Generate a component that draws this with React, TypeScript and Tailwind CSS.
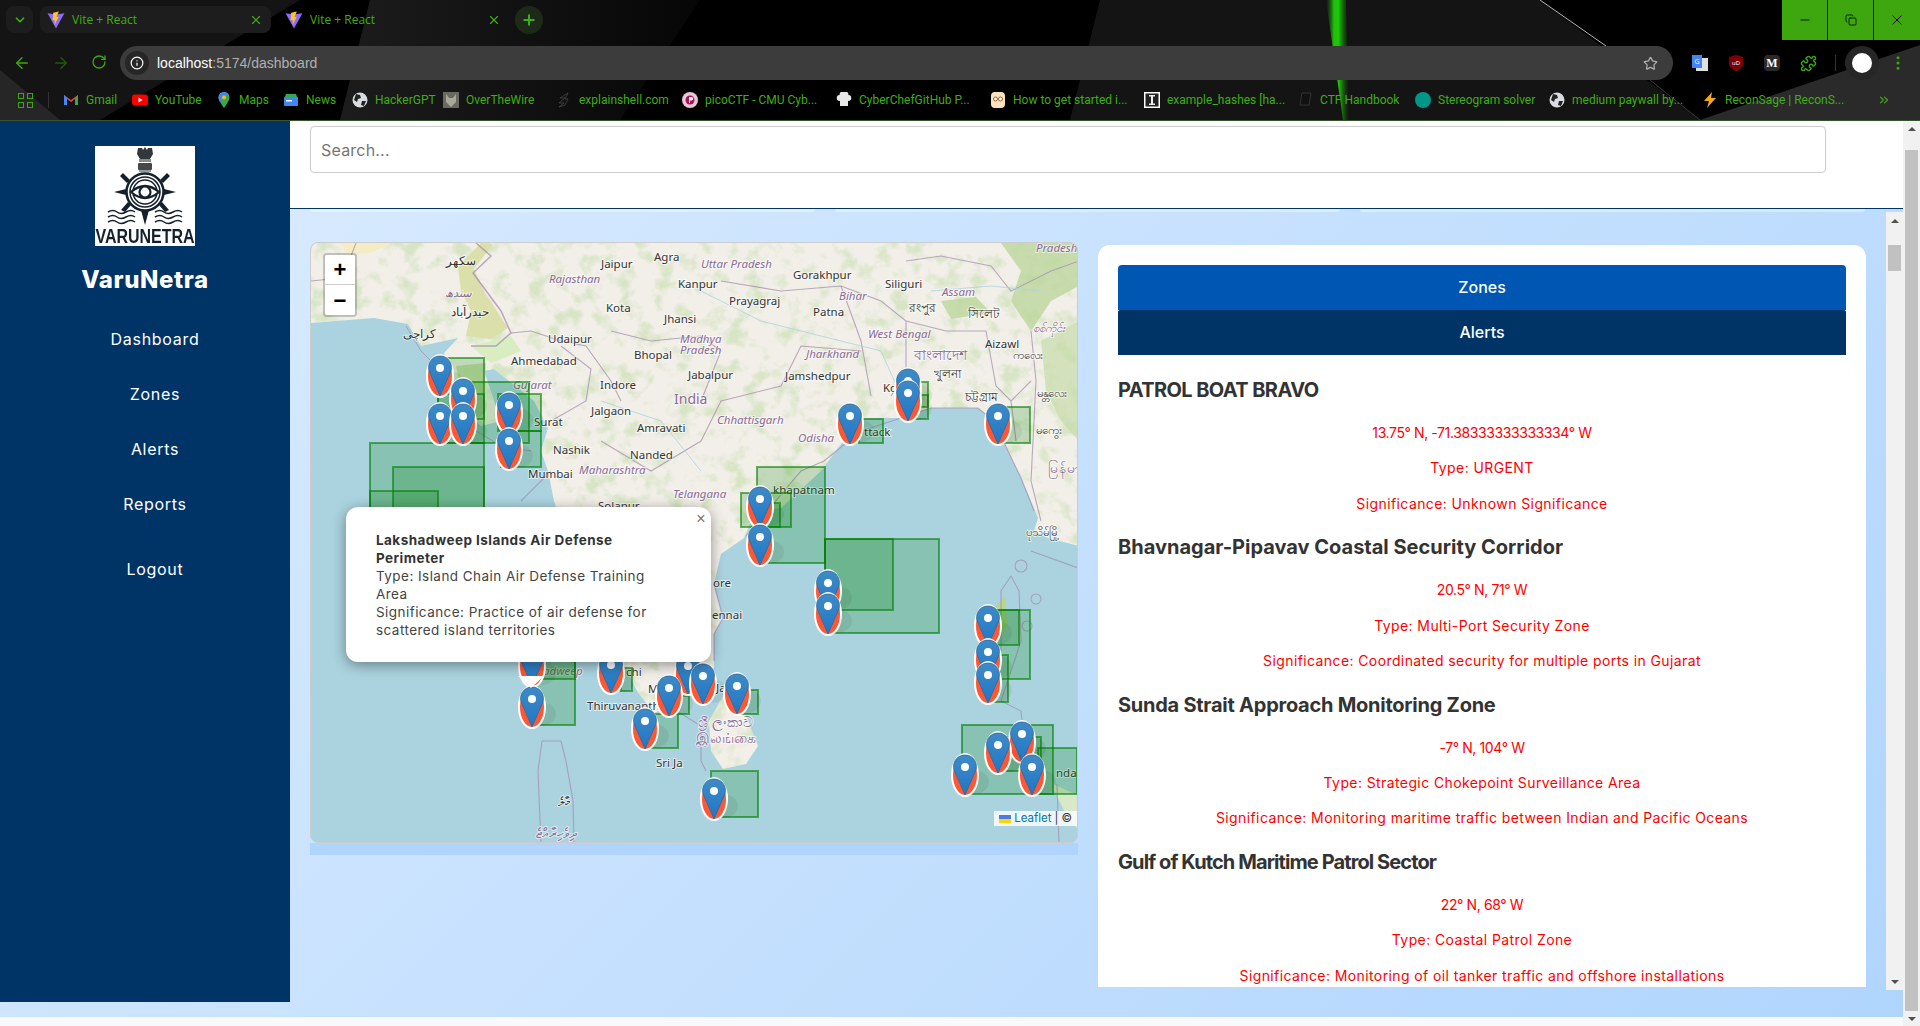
import React from 'react';
import { ArrowLeft, ArrowRight, RotateCw, Info, Star, Plus, X, ChevronDown, Minus, MoreVertical, Puzzle, ChevronsRight, Copy } from 'lucide-react';

const poppins = "font-['Inter','Noto_Sans',sans-serif]";

const landPath =
  'M310 242H1078V545L1047 537L1033 530L1037 517L1030 500L1020 477L1007 450L993 420L977 407L930 407L897 417L863 417L840 443L820 470L780 507L755 510L743 537L720 553L713 583L722 617L713 633L713 667L690 687L680 700L653 712L636 690L622 662L600 620L575 560L553 500L547 470L540 450L547 427L533 400L493 368L483 370L500 420L480 425L455 405L448 380L443 352L457 337L420 345L407 323L373 317L310 322z';
const lankaPath = 'M725 690L745 715L757 745L745 763L722 768L710 750L708 720z';

interface Zone {
  x: number;
  y: number;
  w: number;
  h: number;
}

interface Alert {
  name: string;
  nameClass: string;
  coords: string;
  type: string;
  significance: string;
}

const zones: Zone[] = [
  { x: 437, y: 357, w: 46, h: 85 },
  { x: 437, y: 393, w: 46, h: 25 },
  { x: 460, y: 381, w: 68, h: 61 },
  { x: 497, y: 393, w: 43, h: 37 },
  { x: 500, y: 430, w: 40, h: 36 },
  { x: 369, y: 442, w: 114, h: 160 },
  { x: 392, y: 466, w: 91, h: 130 },
  { x: 369, y: 490, w: 68, h: 90 },
  { x: 858, y: 418, w: 24, h: 24 },
  { x: 905, y: 381, w: 22, h: 37 },
  { x: 905, y: 394, w: 22, h: 12 },
  { x: 1000, y: 406, w: 29, h: 36 },
  { x: 756, y: 466, w: 68, h: 96 },
  { x: 740, y: 492, w: 50, h: 34 },
  { x: 760, y: 502, w: 19, h: 24 },
  { x: 824, y: 538, w: 68, h: 71 },
  { x: 824, y: 538, w: 114, h: 94 },
  { x: 985, y: 609, w: 44, h: 69 },
  { x: 985, y: 609, w: 33, h: 35 },
  { x: 985, y: 654, w: 22, h: 47 },
  { x: 961, y: 724, w: 91, h: 69 },
  { x: 995, y: 736, w: 45, h: 34 },
  { x: 1037, y: 747, w: 39, h: 46 },
  { x: 533, y: 640, w: 41, h: 84 },
  { x: 533, y: 640, w: 41, h: 38 },
  { x: 620, y: 667, w: 11, h: 23 },
  { x: 667, y: 695, w: 21, h: 18 },
  { x: 647, y: 713, w: 30, h: 34 },
  { x: 740, y: 689, w: 17, h: 24 },
  { x: 710, y: 770, w: 47, h: 46 },
];

const pins: [number, number][] = [
  [439, 375], [462, 398], [439, 423], [462, 423], [508, 412], [508, 448],
  [907, 388], [907, 400], [849, 423], [997, 423], [759, 506], [759, 544],
  [827, 590], [827, 613], [987, 625], [987, 659], [987, 682],
  [1021, 741], [997, 752], [964, 774], [1031, 774],
  [531, 665], [531, 706], [610, 672], [687, 673], [668, 695], [644, 728], [702, 683], [736, 693], [713, 798],
];

// text, left, baseline, r = region name in purple, c = country name in purple and larger
const labels: [string, number, number, string?][] = [
  ['سکھر', 445, 264], ['سندھ', 444, 296, 'r'], ['حیدرآباد', 450, 315], ['کراچی', 402, 337],
  ['Jaipur', 600, 267], ['Agra', 653, 260], ['Kanpur', 677, 287], ['Rajasthan', 548, 282, 'r'], ['Kota', 605, 311],
  ['Jhansi', 663, 322], ['Madhya', 679, 342, 'r'], ['Pradesh', 679, 353, 'r'], ['Udaipur', 547, 342], ['Ahmedabad', 510, 364], ['Bhopal', 633, 358],
  ['Gujarat', 512, 388, 'r'], ['Indore', 599, 388], ['India', 673, 403, 'c'], ['Jalgaon', 590, 414], ['Surat', 533, 425], ['Amravati', 636, 431],
  ['Nashik', 552, 453], ['Nanded', 629, 458], ['Maharashtra', 578, 473, 'r'], ['Mumbai', 527, 477], ['Telangana', 672, 497, 'r'], ['Solapur', 597, 509], ['Jabalpur', 687, 378],
  ['Uttar Pradesh', 700, 267, 'r'], ['Gorakhpur', 792, 278], ['Bihar', 838, 299, 'r'], ['Siliguri', 884, 287], ['Assam', 941, 295, 'r'], ['Prayagraj', 728, 304],
  ['রংপুর', 908, 311], ['সিলেট', 967, 317], ['Patna', 812, 315], ['West Bengal', 867, 337, 'r'], ['Aizawl', 984, 347], ['চট্টগ্রাম', 964, 400],
  ['Jharkhand', 805, 357, 'r'], ['বাংলাদেশ', 913, 359, 'c'], ['খুলনা', 933, 377], ['Jamshedpur', 784, 379], ['Ko', 882, 391], ['Chhattisgarh', 716, 423, 'r'],
  ['ttack', 863, 435], ['Odisha', 797, 441, 'r'], ['khapatnam', 772, 493], ['Pradesh', 1035, 251, 'r'],
  ['ore', 712, 586], ['ennai', 711, 618], ['adweep', 542, 674, 'r'], ['chi', 625, 675], ['Thiruvananth', 586, 709], ['Sri Ja', 655, 766], ['M', 647, 692], ['Ja', 715, 691],
  ['ශ්‍රී ලංකාව', 697, 726, 'c'], ['இலங்கை', 695, 742, 'c'], ['nda Ac', 1055, 776], ['މާލެ', 557, 805], ['ދިވެހިރާއްޖެ', 535, 837, 'c'],
  ['ကလေး', 1012, 358], ['မန္တလေး', 1036, 396], ['မကွေး', 1035, 433], ['စစ်ကိုင်း', 1032, 331, 'r'], ['မြန်မာ', 1047, 472, 'c'], ['ပုသိမ်မြို့', 1025, 535],
];

const alerts: Alert[] = [
  { name: 'PATROL BOAT BRAVO', nameClass: 'tracking-[-0.6px]', coords: '13.75° N, -71.38333333333334° W', type: 'Type: URGENT', significance: 'Significance: Unknown Significance' },
  { name: 'Bhavnagar-Pipavav Coastal Security Corridor', nameClass: '', coords: '20.5° N, 71° W', type: 'Type: Multi-Port Security Zone', significance: 'Significance: Coordinated security for multiple ports in Gujarat' },
  { name: 'Sunda Strait Approach Monitoring Zone', nameClass: 'tracking-[-0.25px]', coords: '-7° N, 104° W', type: 'Type: Strategic Chokepoint Surveillance Area', significance: 'Significance: Monitoring maritime traffic between Indian and Pacific Oceans' },
  { name: 'Gulf of Kutch Maritime Patrol Sector', nameClass: 'tracking-[-0.9px]', coords: '22° N, 68° W', type: 'Type: Coastal Patrol Zone', significance: 'Significance: Monitoring of oil tanker traffic and offshore installations' },
];

const bookmarks: { label: string; width: string; icon: React.ReactNode }[] = [
  { label: 'Gmail', width: 'w-[69px]', icon: <svg viewBox="0 0 16 16" className="size-4"><path d="M1 3v10h3V7l4 3 4-3v6h3V3l-7 5z" fill="#ea4335" /><path d="M1 3v10h3V6z" fill="#4285f4" /><path d="M15 3v10h-3V6z" fill="#34a853" /></svg> },
  { label: 'YouTube', width: 'w-[84px]', icon: <svg viewBox="0 0 16 16" className="size-4"><rect y="2.500" width="16" height="11" rx="3" fill="#f00" /><path d="M6.500 5.500v5l4-2.500z" fill="#fff" /></svg> },
  { label: 'Maps', width: 'w-[67px]', icon: <svg viewBox="0 0 16 16" className="size-4"><path d="M8 0a5.500 5.500 0 0 0-5.500 5.500C2.500 9 8 16 8 16s5.500-7 5.500-10.500A5.500 5.500 0 0 0 8 0z" fill="#34a853" /><path d="M8 0a5.500 5.500 0 0 1 4.500 2.400L4 10C3 8.500 2.500 6.800 2.500 5.500A5.500 5.500 0 0 1 8 0z" fill="#4285f4" /><circle cx="8" cy="5.500" r="2" fill="#fbbc04" /></svg> },
  { label: 'News', width: 'w-[69px]', icon: <svg viewBox="0 0 16 16" className="size-4"><path d="M3 2h10l1 3H2z" fill="#34a853" /><rect x="1" y="5" width="14" height="9" rx="1" fill="#4285f4" /><rect x="3" y="8" width="6" height="1.500" fill="#fff" /></svg> },
  { label: 'HackerGPT', width: 'w-[91px]', icon: <Globe /> },
  { label: 'OverTheWire', width: 'w-[113px]', icon: <svg viewBox="0 0 16 16" className="size-4"><rect width="16" height="16" fill="#6a6a60" /><path d="M3 2l3 4h4l3-4v8l-5 5-5-5z" fill="#a8a89c" /></svg> },
  { label: 'explainshell.com', width: 'w-[126px]', icon: <svg viewBox="0 0 16 16" className="size-4"><path d="M12 1L4 6l5 0-6 5 5 0-5 4 6-2 3-6-3 0z" fill="#111" stroke="#555" strokeWidth=".6" /></svg> },
  { label: 'picoCTF - CMU Cyb...', width: 'w-[154px]', icon: <svg viewBox="0 0 16 16" className="size-4"><circle cx="8" cy="8" r="8" fill="#e8c8d8" /><circle cx="8" cy="8" r="4.500" fill="#b01050" /><path d="M7 5h2.500a1.500 1.500 0 0 1 0 3.500H8V11H7z" fill="#fff" /></svg> },
  { label: 'CyberChefGitHub P...', width: 'w-[154px]', icon: <svg viewBox="0 0 16 16" className="size-4"><path d="M4 9a3 3 0 0 1-.5-6 4 4 0 0 1 9 0A3 3 0 0 1 12 9v5H4z" fill="#e8e8e8" /></svg> },
  { label: 'How to get started i...', width: 'w-[154px]', icon: <svg viewBox="0 0 16 16" className="size-4"><rect x="1" y="0" width="14" height="16" rx="4" fill="#fbe3c0" /><circle cx="5.500" cy="7" r="2" fill="#fff" stroke="#a06020" /><circle cx="10.500" cy="7" r="2" fill="#fff" stroke="#a06020" /></svg> },
  { label: 'example_hashes [ha...', width: 'w-[153px]', icon: <svg viewBox="0 0 16 16" className="size-4"><rect width="16" height="16" fill="#fff" /><rect x="1.500" y="1.500" width="13" height="13" fill="#222" /><path d="M5 3h6v1.500H9v7h2V13H5v-1.500h2v-7H5z" fill="#eee" /></svg> },
  { label: 'CTF Handbook', width: 'w-[118px]', icon: <svg viewBox="0 0 16 16" className="size-4"><path d="M5 1h9l-2 12H3z" fill="#111" stroke="#333" /></svg> },
  { label: 'Stereogram solver', width: 'w-[134px]', icon: <span className="block size-4 rounded-full bg-[#009688]" /> },
  { label: 'medium paywall by...', width: 'w-[153px]', icon: <Globe /> },
  { label: 'ReconSage | ReconS...', width: 'w-[150px]', icon: <svg viewBox="0 0 16 16" className="size-4"><path d="M10 0L2 9h5l-2 7 9-10H9z" fill="#f5a623" /></svg> },
];

function Globe() {
  return (
    <svg viewBox="0 0 16 16" className="size-4">
      <circle cx="8" cy="8" r="7.500" fill="#d8dce0" />
      <path d="M4 2l4 1 1 3-3 1-1 3-3-2zM10 9l4 0-2 5-3-1z" fill="#222" />
    </svg>
  );
}

function ViteIcon() {
  return (
    <svg viewBox="0 0 16 16" className="size-[18px] shrink-0">
      <path d="M.5 2l7.500 1.200L15.500 2 8 15.500z" fill="#8c6cf8" />
      <path d="M10.500 .5L5.500 1.500l-.5 7 2-.5-.3 4.500 3.800-7.500-2 .4z" fill="#ffc517" />
    </svg>
  );
}

function Tab({ active }: { active?: boolean }) {
  return (
    <div className={`flex h-[27px] w-[231px] items-center rounded-lg pl-[7px] pr-2 ${active ? 'bg-[#1d1d1d]' : ''}`}>
      <ViteIcon />
      <span className="ml-[7px] flex-1 text-[12px] text-[#3fae14]">Vite + React</span>
      <X size={14} className="text-[#3fae14]" strokeWidth={2} />
    </div>
  );
}

function BrowserChrome() {
  return (
    <div className="relative h-[121px] shrink-0 overflow-hidden border-b border-[#35562a] bg-black font-['Open_Sans',sans-serif]">
      <svg className="absolute inset-0" width="1920" height="120" viewBox="0 0 1920 120">
        <defs>
          <linearGradient id="streak" x1="0" x2="1" y1="0" y2="0">
            <stop offset="0" stopColor="#1a6a08" stopOpacity="0" />
            <stop offset=".35" stopColor="#1dc40b" />
            <stop offset=".55" stopColor="#1dc40b" />
            <stop offset="1" stopColor="#1a6a08" stopOpacity="0" />
          </linearGradient>
          <linearGradient id="dim" x1="0" x2="1" y1="0" y2="0">
            <stop offset="0" stopColor="#1c1c1c" />
            <stop offset="1" stopColor="#060606" />
          </linearGradient>
        </defs>
        <path d="M0 0H300L100 120H0z" fill="#141414" />
        <path d="M0 70L60 120H0z" fill="#262626" />
        <path d="M370 0H700L620 120H340z" fill="url(#dim)" />
        <path d="M1070 120L1100 0H1540L1700 120z" fill="#141414" />
        <path d="M1700 120L1920 45V120z" fill="#2a2a2a" />
        <path d="M1326 0h20l3 120h-6z" fill="url(#streak)" />
        <path d="M1540 0L1606 46" stroke="#b8b8b8" strokeWidth="1" />
        <path d="M1650 80L1700 120" stroke="#3a3a3a" strokeWidth="1" />
      </svg>

      <div className="relative flex h-[46px] items-start">
        <div className="mt-[6px] ml-[6px] flex size-[27px] items-center justify-center rounded-lg bg-[#1d1d1d] text-[#3fae14]">
          <ChevronDown size={14} strokeWidth={3} />
        </div>
        <div className="mt-[6px] ml-[7px] flex gap-[7px]">
          <Tab active />
          <Tab />
        </div>
        <div className="mt-[6px] ml-[6px] flex size-[28px] items-center justify-center rounded-full bg-[#1d2a1a] text-[#3fae14]">
          <Plus size={16} strokeWidth={3} />
        </div>
        <div className="ml-auto flex h-[40px] gap-px">
          <div className="flex w-[45px] items-center justify-center bg-[#3ea60f] text-black"><Minus size={14} strokeWidth={1.5} /></div>
          <div className="flex w-[45px] items-center justify-center bg-[#3ea60f] text-black"><Copy size={12} strokeWidth={1.5} /></div>
          <div className="flex w-[46px] items-center justify-center bg-[#3ea60f] text-black"><X size={16} strokeWidth={1.5} /></div>
        </div>
      </div>

      <div className="relative flex h-[34px] items-center">
        <div className="ml-[13px] flex w-[107px] gap-[21px] text-[#3ea60f]">
          <ArrowLeft size={18} />
          <ArrowRight size={18} className="text-[#1f5a0c]" />
          <RotateCw size={16} />
        </div>
        <div className="flex h-[34px] w-[1553px] items-center rounded-full bg-[#3c3c3c] pl-[5px] pr-[15px]">
          <div className="flex size-[24px] items-center justify-center rounded-full bg-[#262626] text-white"><Info size={14} /></div>
          <span className="ml-[8px] flex-1 font-['Liberation_Sans',sans-serif] text-[14px] text-white">localhost<span className="text-[#b0b0b0]">:5174/dashboard</span></span>
          <Star size={15} className="text-[#b0b0b0]" />
        </div>
        <div className="ml-[19px] flex items-center gap-[20px]">
          <svg viewBox="0 0 16 16" className="size-4"><rect x="4" y="3" width="12" height="13" fill="#e0e0e0" /><rect width="10" height="13" fill="#4285f4" /><text x="5" y="9" fontSize="7" fill="#fff" textAnchor="middle">G</text></svg>
          <svg viewBox="0 0 16 16" className="size-4"><path d="M8 0l7 2v7c0 3-3 5.500-7 7-4-1.500-7-4-7-7V2z" fill="#800000" /><text x="8" y="10" fontSize="6" fill="#fff" textAnchor="middle">uD</text></svg>
          <div className="flex size-4 items-center justify-center rounded-sm bg-[#2a2a2a] font-['Liberation_Serif',serif] text-[12px] font-bold text-white">M</div>
          <Puzzle size={17} className="text-[#3ea60f]" />
        </div>
        <div className="ml-[18px] h-[16px] w-px bg-[#333]" />
        <div className="ml-[9px] flex size-[34px] items-center justify-center rounded-full bg-[#262626]">
          <div className="size-[20px] rounded-full bg-white" />
        </div>
        <MoreVertical size={18} className="ml-[10px] text-[#3ea60f]" />
      </div>

      <div className="relative flex h-[40px] items-center pl-[18px] font-['Roboto',sans-serif] text-[12px] text-[#3fae14]">
        <div className="grid shrink-0 grid-cols-[6px_6px] gap-[3px]">
          <span className="size-[6px] border border-[#3ea60f]" /><span className="size-[6px] border border-[#3ea60f]" /><span className="size-[6px] border border-[#3ea60f]" /><span className="size-[6px] border border-[#3ea60f]" />
        </div>
        <div className="ml-[15px] h-[16px] w-px shrink-0 bg-[#333]" />
        <div className="ml-[14px] flex">
          {bookmarks.map((b) => (
            <div key={b.label} className={`flex shrink-0 items-center gap-[7px] whitespace-nowrap ${b.width}`}>
              {b.icon}
              <span>{b.label}</span>
            </div>
          ))}
        </div>
        <ChevronsRight size={14} className="ml-auto mr-[29px]" />
      </div>
    </div>
  );
}

function Logo() {
  const ink = '#14202c';
  return (
    <div className="flex size-[100px] flex-col items-center overflow-hidden bg-white">
      <svg viewBox="0 0 100 82" className="h-[82px] w-[100px] shrink-0">
        {/* pillar */}
        <path d="M43 2h4l1 2 2-3 2 3 1-2h4l1 6-3 5H45l-3-5z" fill="#33383c" />
        <rect x="44" y="13" width="12" height="3" fill="#8a8a8a" />
        <rect x="43" y="17" width="14" height="7" rx="1" fill="#45494c" />
        <rect x="44" y="24" width="12" height="2" fill="#999" />
        {/* handles and points of the helm */}
        <path d="M25 30l3-3 7 7-3 3zM75 30l-3-3-7 7 3 3zM30 66l-4-2 7-8 3 3zM70 66l4-2-7-8-3 3z" fill={ink} />
        <path d="M19 46l12-3v6zM81 46l-12-3v6z" fill={ink} />
        <circle cx="50" cy="46" r="18.500" fill="#fff" stroke={ink} strokeWidth="2.500" />
        <circle cx="50" cy="46" r="15" fill="none" stroke={ink} strokeWidth="1.500" />
        <circle cx="50" cy="46" r="12" fill="none" stroke={ink} strokeWidth="1.500" />
        <path d="M36 46q14-12 28 0q-14 12-28 0z" fill="#fff" stroke={ink} strokeWidth="2.200" />
        <circle cx="50" cy="46" r="5.500" fill="#fff" stroke={ink} strokeWidth="2.200" />
        <path d="M13 66q5-3 9 0t9 0t9 0M60 66q5-3 9 0t9 0t9 0M13 71q5-3 9 0t9 0t9 0M60 71q5-3 9 0t9 0t9 0M13 76q5-3 9 0t9 0t9 0M60 76q5-3 9 0t9 0t9 0" fill="none" stroke={ink} strokeWidth="1.500" />
        <path d="M46 64h8l-4 15z" fill={ink} />
      </svg>
      <span className="scale-x-[.8] whitespace-nowrap font-['Liberation_Sans',sans-serif] text-[20px] leading-[17px] font-bold text-[#14202c]">VARUNETRA</span>
    </div>
  );
}

function Sidebar() {
  return (
    <aside className="flex h-[881px] w-[290px] shrink-0 flex-col bg-[#003366] text-white">
      <div className="flex w-[290px] flex-col items-center pt-[25px]">
        <Logo />
        <h1 className={`mt-[16px] text-[24px] leading-[36px] font-extrabold tracking-[0.6px] ${poppins}`}>VaruNetra</h1>
      </div>
      <nav className={`mt-[14px] flex flex-col pl-[20px] text-center text-[16px] tracking-[0.7px] ${poppins}`}>
        {['Dashboard', 'Zones', 'Alerts', 'Reports'].map((n) => (
          <a key={n} className="h-[55px] leading-[55px]">{n}</a>
        ))}
        <a className="mt-[10px] h-[55px] leading-[55px]">Logout</a>
      </nav>
    </aside>
  );
}

function Pin({ x, y }: { x: number; y: number }) {
  return (
    <g transform={`translate(${x} ${y})`}>
      <ellipse cx="9" cy="7" rx="15" ry="12" fill="#000" opacity=".06" />
      <ellipse cx="0" cy="0" rx="13" ry="21" fill="#ff5733" stroke="#fff" strokeWidth="2" />
      <path d="M0 20L-10.500 -4C-13.500 -11 -9 -20 0 -20S13.500 -11 10.500 -4z" fill="url(#pinBlue)" stroke="#2a6aa0" strokeWidth=".8" />
      <circle cx="0" cy="-8" r="4" fill="#fff" />
    </g>
  );
}

function labelSize(kind?: string) {
  return kind === 'c' ? 14 : 11.5;
}

function MapPanel() {
  return (
    <div className="h-[613px]">
      <div className="relative h-[601px] overflow-hidden rounded-[8px] border border-[#cccccc] bg-[#aad3df]">
        <svg className="absolute inset-0" width="768" height="601" viewBox="310 242 768 601">
          <defs>
            <clipPath id="land"><path d={landPath} /><path d={lankaPath} /></clipPath>
            <filter id="terrain" x="0" y="0" width="100%" height="100%" colorInterpolationFilters="sRGB">
              <feTurbulence type="fractalNoise" baseFrequency=".055" numOctaves="4" seed="7" />
              <feColorMatrix values="0 0 0 0 .78  0 0 0 0 .87  0 0 0 0 .68  4 0 0 0 -2" />
            </filter>
            <linearGradient id="pinBlue" x1="0" x2="0" y1="0" y2="1">
              <stop offset="0" stopColor="#3f8ac6" />
              <stop offset="1" stopColor="#1f77c6" />
            </linearGradient>
          </defs>
          {/* land */}
          <path d={landPath} fill="#f2efe9" />
          <path d={lankaPath} fill="#f2efe9" />
          <path d="M1050 782L1078 795V830L1064 812z" fill="#d8e8c8" />
          {/* forest and desert */}
          <rect x="310" y="242" width="768" height="601" filter="url(#terrain)" clipPath="url(#land)" opacity=".6" />
          <path d="M480 242L492 243L473 268L483 290L507 327L490 338L465 335L470 310L460 290L457 265z" fill="#dbdfa9" />
          <path d="M340 242h50l-20 10h-25z" fill="#f5ecc6" />
          <path d="M470 345L510 335L520 350L490 362z" fill="#d9eec0" />
          <path d="M455 365L485 362L483 395L460 390z" fill="#c0d8a0" opacity=".8" />
          <path d="M940 300L975 296L990 312L950 318z M1000 242H1078V285L1050 300L1030 330L1010 300L1020 270z" fill="#bcd69c" opacity=".8" />
          <path d="M1040 340L1078 320V440L1060 420L1045 390z" fill="#c6dcaa" opacity=".7" />
          <path d="M995 605L1004 595L1006 625L1000 632z" fill="#b8d68c" />
          {/* coast and borders */}
          <g fill="none" stroke="#a58fb0" strokeWidth="1.100" opacity=".75">
            <path d="M310 280L330 278L345 268L350 255L355 242" />
            <path d="M475 242L490 255L472 272L500 310L510 332L495 345L470 345" strokeWidth="1.500" />
            <path d="M510 332L530 330L560 340L585 345L610 380L620 400" />
            <path d="M560 345L590 368L585 400L550 420" />
            <path d="M610 330L650 340L700 335L720 350L700 400" />
            <path d="M600 440L650 470L700 440L720 400L780 385L800 345L860 350" />
            <path d="M720 280L780 290L840 285L880 300L905 320L905 370L890 395" />
            <path d="M840 285L860 340L870 395" />
            <path d="M905 260L940 255L990 265L1010 290L1050 270L1078 260" />
            <path d="M905 320L945 330L985 330L995 385L1010 400" />
            <path d="M1030 380L1010 400L1015 440" />
            <path d="M1030 330L1035 380L1030 480L1040 520" />
            <path d="M405 325L420 350L450 380L475 430L500 445L530 450" strokeWidth="1" />
            <path d="M745 535L800 470L823 460L860 430L897 418L930 407L977 407L993 420L1007 450L1020 477L1033 510" />
            <path d="M713 660L713 633L722 617L713 583" />
            <path d="M550 470L520 500" />
            <path d="M1030 550L1077 567" />
            <path d="M1000 650L1000 590L1010 575L1018 590L1020 640L1000 700L1020 710L1022 730" />
            <ellipse cx="1020" cy="565" rx="6" ry="6" />
            <ellipse cx="1035" cy="598" rx="5" ry="5" />
            <ellipse cx="1026" cy="625" rx="5" ry="5" />
            <path d="M1056 783L1058 843" />
            <path d="M541 740L560 740L565 760L572 800L573 843M541 740L537 770L540 843" />
            <path d="M660 700L700 725L700 760L705 770" />
          </g>
          <g fill="none" stroke="#a9d3e6" strokeWidth=".8">
            <path d="M700 290L760 320L820 335L880 350L900 395M930 290L990 285L1040 290M600 400L660 420L700 470" />
          </g>
          {/* place names */}
          <g fontFamily="'Noto Sans','Noto Sans CJK SC',sans-serif" stroke="#ffffff" strokeWidth="2" strokeOpacity=".6" paintOrder="stroke">
            {labels.map(([text, x, y, kind]) => (
              <text key={`${text}${x}`} x={x} y={y} fontSize={labelSize(kind)} fill={kind ? '#8a6a94' : '#333333'} fontStyle={kind === 'r' ? 'italic' : 'normal'}>{text}</text>
            ))}
          </g>
          {/* zones */}
          {zones.map((z, i) => (
            <rect key={i} x={z.x} y={z.y} width={z.w} height={z.h} fill="#008000" fillOpacity=".2" stroke="#008000" strokeOpacity=".6" strokeWidth="2" />
          ))}
          {pins.map(([x, y]) => <Pin key={`${x}-${y}`} x={x} y={y} />)}
        </svg>

        <div className="absolute top-[10px] left-[12px] flex w-[34px] flex-col rounded-[4px] border-2 border-black/20 bg-clip-padding">
          <div className="flex h-[30px] items-center justify-center rounded-t-[2px] border-b border-[#ccc] bg-white font-['Liberation_Sans',sans-serif] text-[22px] font-bold text-black">+</div>
          <div className="flex h-[30px] items-center justify-center rounded-b-[2px] bg-white font-['Liberation_Sans',sans-serif] text-[22px] font-bold text-black">−</div>
        </div>

        <div className={`absolute top-[264px] left-[35px] flex h-[155px] w-[365px] flex-col justify-center rounded-[12px] bg-white pl-[30px] pr-[40px] text-[13.5px] leading-[18px] tracking-[0.45px] text-[#444] shadow-[0_3px_14px_rgba(0,0,0,0.4)] ${poppins}`}>
          <b className="font-bold text-[#333]">Lakshadweep Islands Air Defense Perimeter</b>
          <span>Type: Island Chain Air Defense Training Area</span>
          <span>Significance: Practice of air defense for scattered island territories</span>
          <span className="absolute top-[3px] right-[5px] font-['Liberation_Sans',sans-serif] text-[16px] text-[#757575]">×</span>
        </div>
        <div className="absolute top-[433px] left-[207px] size-0 border-x-[13px] border-t-[12px] border-x-transparent border-t-white" />

        <div className={`absolute right-0 bottom-[16px] flex h-[15px] items-center gap-[3px] bg-white/80 px-[5px] text-[11.5px] text-[#333] ${poppins}`}>
          <svg viewBox="0 0 12 8" className="h-2 w-3"><rect width="12" height="4" fill="#4C7BE1" /><rect y="4" width="12" height="4" fill="#FFD500" /></svg>
          <span className="text-[#0078a8]">Leaflet</span> | ©
        </div>
      </div>
      <div className="h-[12px] bg-[#b0d4fb]" />
    </div>
  );
}

function AlertsPanel() {
  return (
    <div className={`mt-[3px] h-[742px] overflow-hidden rounded-t-[12px] bg-white p-[20px] ${poppins}`}>
      <div className="flex h-[45px] items-center justify-center rounded-t-[4px] bg-[#0056b3] pb-[1px] text-[16px] font-medium text-white">Zones</div>
      <div className="flex h-[45px] items-center justify-center rounded-t-[2px] bg-[#003366] pb-[1px] text-[16px] font-medium text-white">Alerts</div>
      <div className="pt-[17px]">
        {alerts.map((a) => (
          <div key={a.name} className="h-[157.33px]">
            <h3 className={`h-[36px] text-[20px] leading-[36px] font-bold text-[#333] ${a.nameClass}`}>{a.name}</h3>
            <div className="flex flex-col pt-[14px] text-center text-[14px] leading-[21px] tracking-[0.4px] text-[#ff0000]">
              <p className="h-[35.3px] tracking-[-0.4px]">{a.coords}</p>
              <p className="h-[35.3px]">{a.type}</p>
              <p className="h-[35.3px]">{a.significance}</p>
            </div>
          </div>
        ))}
      </div>
    </div>
  );
}

function Scrollbar({ thumb }: { thumb: string }) {
  return (
    <div className="flex w-[17px] shrink-0 flex-col items-center bg-[#f1f1f1]">
      <div className="flex h-[17px] items-center justify-center">
        <span className="size-0 border-x-[4px] border-b-[4px] border-x-transparent border-b-[#505050]" />
      </div>
      <div className="w-full flex-1 px-[2px]">
        <div className={`w-full bg-[#c1c1c1] ${thumb}`} />
      </div>
      <div className="flex h-[17px] items-center justify-center">
        <span className="size-0 border-x-[4px] border-t-[4px] border-x-transparent border-t-[#505050]" />
      </div>
    </div>
  );
}

export default function App() {
  return (
    <div className="flex h-[1026px] w-[1920px] flex-col overflow-hidden bg-white">
      <BrowserChrome />
      <div className="flex min-h-0 flex-1">
        <div className="flex min-w-0 flex-1 flex-col bg-[#f8f9fa]">
          <div className="flex h-[896px] bg-[linear-gradient(135deg,#dcecff,#b0d5fd)]">
            <Sidebar />
            <main className="flex min-w-0 flex-1 flex-col">
              <header className="h-[88px] shrink-0 border-b border-[#003366] bg-white pt-[5px] pl-[20px]">
                <input
                  placeholder="Search..."
                  className={`h-[47px] w-[1516px] rounded-[4px] border border-[#cccccc] px-[10px] text-[16px] tracking-[0.2px] placeholder:text-[#757575] ${poppins}`}
                />
              </header>
              <div className="flex h-[3px] shrink-0 gap-[20px] px-[20px]">
                <div className="w-[505px] rounded-b-[8px] bg-white/40" />
                <div className="w-[505px] rounded-b-[8px] bg-white/40" />
                <div className="w-[505px] rounded-b-[8px] bg-white/40" />
              </div>
              <div className="flex min-h-0 flex-1">
                <div className="grid h-[805px] flex-1 grid-cols-2 gap-[20px] overflow-hidden px-[20px] pt-[30px]">
                  <MapPanel />
                  <AlertsPanel />
                </div>
                <div className="flex h-[778px]"><Scrollbar thumb="mt-[16px] h-[26px]" /></div>
              </div>
            </main>
          </div>
        </div>
        <Scrollbar thumb="mt-[14px] h-[861px]" />
      </div>
    </div>
  );
}
